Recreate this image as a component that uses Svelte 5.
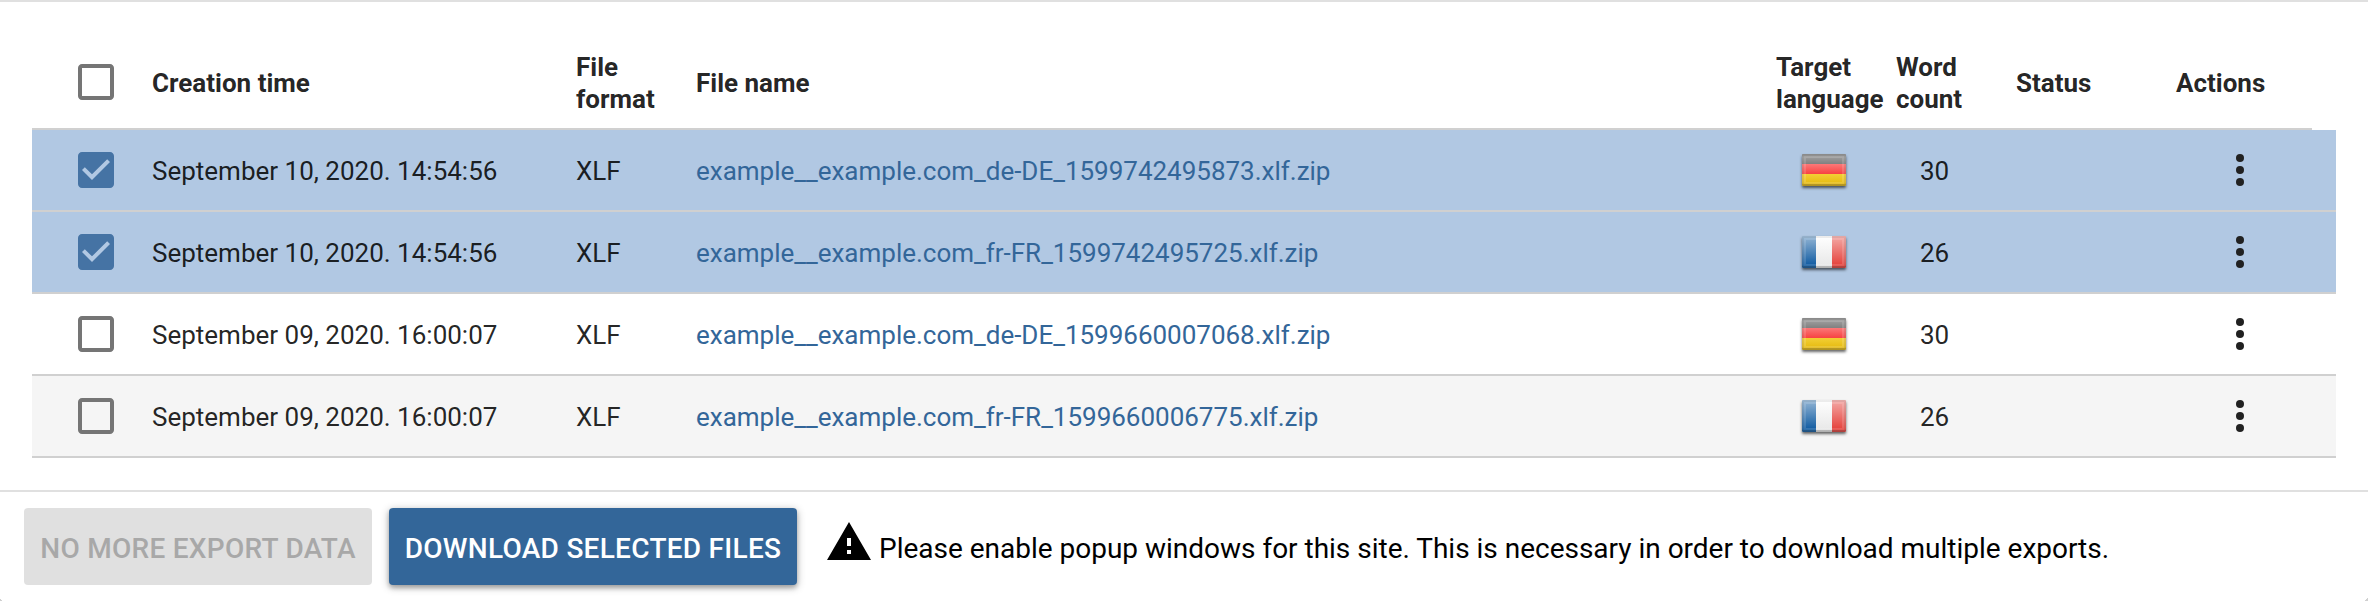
<script>
  const rows = [
    { time: 'September 10, 2020. 14:54:56', file: 'example__example.com_de-DE_1599742495873.xlf.zip', lang: 'de', words: 30, selected: true },
    { time: 'September 10, 2020. 14:54:56', file: 'example__example.com_fr-FR_1599742495725.xlf.zip', lang: 'fr', words: 26, selected: true },
    { time: 'September 09, 2020. 16:00:07', file: 'example__example.com_de-DE_1599660007068.xlf.zip', lang: 'de', words: 30, selected: false },
    { time: 'September 09, 2020. 16:00:07', file: 'example__example.com_fr-FR_1599660006775.xlf.zip', lang: 'fr', words: 26, selected: false }
  ];
</script>

{#snippet checkbox(checked)}
  <svg class="check" class:on={checked} viewBox="0 0 24 24" width="48" height="48">
    {#if checked}
      <path d="M19 3H5c-1.11 0-2 .9-2 2v14c0 1.1.89 2 2 2h14c1.11 0 2-.9 2-2V5c0-1.1-.89-2-2-2zm-9 14l-5-5 1.41-1.41L10 14.17l7.59-7.59L19 8l-9 9z" />
    {:else}
      <path d="M19 5v14H5V5h14m0-2H5c-1.1 0-2 .9-2 2v14c0 1.1.9 2 2 2h14c1.1 0 2-.9 2-2V5c0-1.1-.9-2-2-2z" />
    {/if}
  </svg>
{/snippet}

<div class="panel">
  <div class="table">
    <div class="row head">
      <div>{@render checkbox(false)}</div>
      <div class="text">Creation time</div>
      <div class="text">File<br />format</div>
      <div class="text">File name</div>
      <div class="text">Target<br />language</div>
      <div class="text">Word<br />count</div>
      <div class="text">Status</div>
      <div class="text">Actions</div>
    </div>
    {#each rows as row}
      <div class="row item" class:selected={row.selected}>
        <div>{@render checkbox(row.selected)}</div>
        <div class="text">{row.time}</div>
        <div class="text">XLF</div>
        <div class="text file">{row.file}</div>
        <div class="lang"><span class="flag {row.lang}"></span></div>
        <div class="text words">{row.words}</div>
        <div></div>
        <div class="actions">
          <svg viewBox="0 0 24 24" width="48" height="48">
            <circle cx="12" cy="6" r="2" /><circle cx="12" cy="12" r="2" /><circle cx="12" cy="18" r="2" />
          </svg>
        </div>
      </div>
    {/each}
  </div>
  <div class="footer">
    <button class="disabled" disabled>NO MORE EXPORT DATA</button>
    <button class="primary">DOWNLOAD SELECTED FILES</button>
    <svg class="warning" viewBox="0 0 24 24" width="48" height="48">
      <path d="M1 21h22L12 2 1 21zm12-3h-2v-2h2v2zm0-4h-2v-4h2v4z" />
    </svg>
    <span class="note">Please enable popup windows for this site. This is necessary in order to download multiple exports.</span>
  </div>
</div>

<style>
  :global(body) {
    background: #fff;
    overflow: hidden;
  }
  .panel {
    box-sizing: border-box;
    height: 601px;
    border-top: 2px solid #e0e0e0;
    background:
      linear-gradient(45deg, #d0d0d0 50%, transparent 50%) left bottom / 3px 3px no-repeat,
      linear-gradient(-45deg, #d0d0d0 50%, transparent 50%) right bottom / 3px 3px no-repeat;
    font-family: Roboto, sans-serif;
    font-size: 26px;
    color: rgba(0, 0, 0, 0.87);
  }
  .table {
    height: 490px;
    box-sizing: border-box;
    padding: 32px 32px 0;
    border-bottom: 2px solid #e0e0e0;
  }
  .row {
    display: grid;
    grid-template-columns: 120px 424px 120px 1080px 120px 120px 160px 1fr;
    align-items: center;
    box-sizing: border-box;
    border-bottom: 2px solid #d0d0d0;
    white-space: nowrap;
  }
  .row > :first-child {
    padding-left: 40px;
  }
  .text {
    padding-top: 2px;
  }
  .head {
    height: 96px;
    margin-right: 24px;
    padding-top: 2px;
    font-weight: 700;
    line-height: 32px;
  }
  .item {
    height: 82px;
  }
  .item:nth-child(odd) {
    background: #f5f5f5;
  }
  .item:nth-child(4) {
    background: #fff;
  }
  .item.selected {
    background: #b1c8e3;
  }
  svg {
    display: block;
    flex: none;
  }
  .check {
    fill: #757575;
  }
  .check.on {
    fill: #4573a4;
  }
  .file {
    color: #336699;
    letter-spacing: -0.01px;
  }
  .lang {
    padding-left: 26px;
  }
  .words {
    padding-left: 24px;
  }
  .actions {
    padding-left: 40px;
    fill: #212121;
  }
  .flag {
    display: block;
    box-sizing: border-box;
    width: 44px;
    height: 32px;
    border-radius: 1px;
    box-shadow:
      inset 0 0 0 2px rgba(0, 0, 0, 0.07),
      inset 0 -2px 1px rgba(0, 0, 0, 0.18),
      inset 0 0 0 4px rgba(255, 255, 255, 0.14),
      0 2px 3px rgba(0, 0, 0, 0.6);
  }
  .de {
    background: linear-gradient(#858585 0 1px, #9c9c9c 3px, #808080 10px, #fb7878 10px, #f74242 20px, #f3cf35 20px, #e3b608 32px);
  }
  .fr {
    background:
      linear-gradient(#fff, #e6e6e6) 14px 0 / 16px 100% no-repeat,
      linear-gradient(rgba(255, 255, 255, 0.58), rgba(255, 255, 255, 0.02)),
      linear-gradient(90deg, #00509b 0 22px, #e3352e 22px);
  }
  .footer {
    display: flex;
    align-items: flex-start;
    padding: 16px 24px 0;
  }
  button {
    box-sizing: border-box;
    height: 77px;
    padding: 4px 0 0;
    border: 0;
    border-radius: 4px;
    font: 500 28px/73px Roboto, sans-serif;
    letter-spacing: 0.28px;
    white-space: nowrap;
  }
  .disabled {
    width: 348px;
    background: #e0e0e0;
    color: #a8a8a8;
  }
  .primary {
    width: 408px;
    margin-left: 17px;
    background: #336699;
    color: #fff;
    box-shadow: 0 2px 8px rgba(0, 0, 0, 0.3), 0 3px 4px rgba(0, 0, 0, 0.2);
  }
  .warning {
    margin: 10px 0 0 28px;
    fill: #000;
  }
  .note {
    margin: 1px 0 0 6px;
    font-size: 28px;
    line-height: 80px;
    letter-spacing: -0.01px;
    color: #000;
    white-space: nowrap;
  }
</style>
